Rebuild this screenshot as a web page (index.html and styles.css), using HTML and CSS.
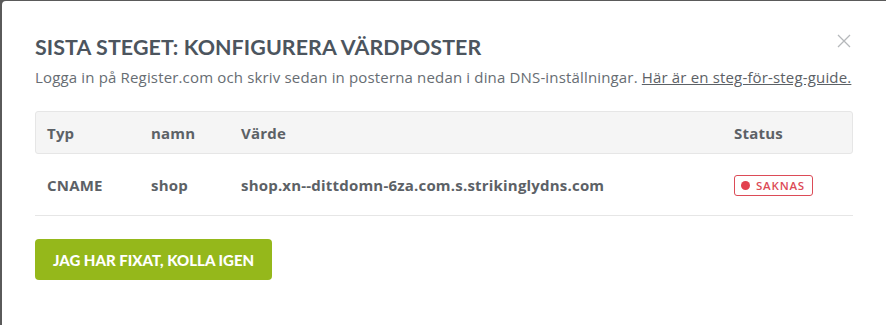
FILE: index.html
```html
<!DOCTYPE html>
<html lang="sv">
<head>
  <meta charset="UTF-8">
  <meta name="viewport" content="width=device-width, initial-scale=1.0">
  <title>Konfigurera värdposter</title>
  <link rel="stylesheet" href="styles.css">
</head>
<body>
  <div class="modal">
    <button class="close" aria-label="Stäng">
      <svg width="14" height="14" viewBox="0 0 14 14"><path d="M1 1L13 13M13 1L1 13" stroke="#b5b8bb" stroke-width="1.3" fill="none"/></svg>
    </button>
    <h1>Sista steget: Konfigurera värdposter</h1>
    <p class="intro">Logga in på Register.com och skriv sedan in posterna nedan i dina DNS-inställningar. <a href="#">Här är en steg-för-steg-guide.</a></p>

    <div class="records">
      <div class="row head">
        <div>Typ</div>
        <div>namn</div>
        <div>Värde</div>
        <div>Status</div>
      </div>
      <div class="row">
        <div>CNAME</div>
        <div>shop</div>
        <div>shop.xn--dittdomn-6za.com.s.strikinglydns.com</div>
        <div><span class="badge"><span class="dot"></span>Saknas</span></div>
      </div>
    </div>

    <button class="check">Jag har fixat, kolla igen</button>
  </div>
</body>
</html>
```

FILE: styles.css
```css
/* Basic Reset */
* { box-sizing: border-box; margin: 0; padding: 0; }

body {
  background: #5a5a5a;
  font-family: "Open Sans", Arial, sans-serif;
  color: #5c6166;
  height: 325px;
  overflow: hidden;
}

/* Dialog */
.modal {
  position: relative;
  margin: 1px 0 0 2px;
  height: 324px;
  background: #fff;
  border-top-left-radius: 4px;
  padding: 33px 33px 0 33px;
}

.close {
  position: absolute;
  top: 33px;
  right: 35px;
  border: none;
  background: none;
  cursor: pointer;
  line-height: 0;
}

h1 {
  font-family: Lato, "Open Sans", sans-serif;
  font-weight: 700;
  font-size: 21.4px;
  text-transform: uppercase;
  color: #4c555e;
  letter-spacing: 0.1px;
  line-height: 26px;
}

.intro {
  margin-top: 7px;
  font-size: 15px;
  letter-spacing: 0.16px;
  line-height: 20px;
  white-space: nowrap;
  color: #676d73;
}
.intro a { color: #5c6166; text-decoration: underline; }

/* Records table */
.records { margin-top: 24px; }

.row {
  display: grid;
  grid-template-columns: 104px 90px 493px 1fr;
  align-items: center;
  height: 62px;
  padding-left: 12px;
  font-size: 15px;
  font-weight: 700;
  letter-spacing: 0.2px;
  color: #5c6166;
  border-bottom: 1px solid #e6e6e6;
}
.row.head {
  height: 43px;
  background: #f5f5f5;
  border: 1px solid #e6e6e6;
  border-radius: 3px;
  padding-left: 11px;
}

.badge {
  display: inline-flex;
  align-items: center;
  gap: 6px;
  height: 21px;
  padding: 0 7px 0 6px;
  border: 1px solid #dc4b57;
  border-radius: 3px;
  color: #dc4b57;
  font-size: 11.5px;
  font-weight: 600;
  letter-spacing: 0.8px;
  text-transform: uppercase;
}
.dot {
  width: 9px;
  height: 9px;
  border-radius: 50%;
  background: #e2414f;
}

/* Button */
.check {
  margin-top: 23px;
  width: 237px;
  height: 41px;
  border: none;
  border-radius: 4px;
  background: #95b81b;
  color: #fff;
  font-family: Lato, "Open Sans", sans-serif;
  font-weight: 900;
  font-size: 15px;
  text-transform: uppercase;
  cursor: pointer;
}
.check:hover { background: #86a617; }
```
